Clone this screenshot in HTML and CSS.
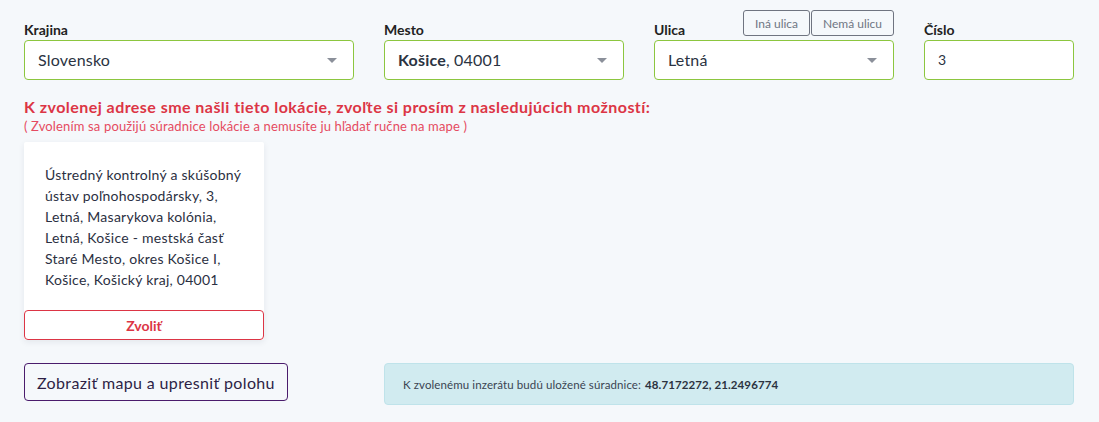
FILE: index.html
```html
<!DOCTYPE html>
<html lang="sk">
<head>
<meta charset="utf-8">
<title>Adresa</title>
<link rel="stylesheet" href="styles.css">
</head>
<body>
<main class="page">
  <div class="fields">
    <div class="field">
      <div class="label-row"><label class="label">Krajina</label></div>
      <div class="select"><span class="value">Slovensko</span><span class="caret"></span></div>
    </div>
    <div class="field">
      <div class="label-row"><label class="label">Mesto</label></div>
      <div class="select"><span class="value"><b>Košice</b>, 04001</span><span class="caret"></span></div>
    </div>
    <div class="field">
      <div class="label-row">
        <label class="label">Ulica</label>
        <div class="street-btns"><button class="mini-btn">Iná ulica</button><button class="mini-btn">Nemá ulicu</button></div>
      </div>
      <div class="select"><span class="value">Letná</span><span class="caret"></span></div>
    </div>
    <div class="field">
      <div class="label-row"><label class="label">Číslo</label></div>
      <div class="input"><span class="value small">3</span></div>
    </div>
  </div>

  <h2 class="notice">K zvolenej adrese sme našli tieto lokácie, zvoľte si prosím z nasledujúcich možností:</h2>
  <p class="notice-sub">( Zvolením sa použijú súradnice lokácie a nemusíte ju hľadať ručne na mape )</p>

  <div class="cards">
    <div class="card">
      <p class="card-text">Ústredný kontrolný a skúšobný ústav poľnohospodársky, 3, Letná, Masarykova kolónia, Letná, Košice - mestská časť Staré Mesto, okres Košice I, Košice, Košický kraj, 04001</p>
      <button class="choose-btn">Zvoliť</button>
    </div>
  </div>

  <div class="bottom">
    <div><button class="map-btn">Zobraziť mapu a upresniť polohu</button></div>
    <div class="alert">K zvolenému inzerátu budú uložené súradnice: <b>48.7172272, 21.2496774</b></div>
  </div>
</main>
</body>
</html>
```

FILE: styles.css
```css
* { box-sizing: border-box; }
html, body { margin: 0; padding: 0; }
body {
  background: #f5f8fb;
  font-family: Lato, "Open Sans", sans-serif;
  color: #2b3240;
}
.page {
  width: 1050px;
  margin-left: 24px;
  padding-top: 20px;
}
.fields {
  display: grid;
  grid-template-columns: 330px 240px 240px 150px;
  column-gap: 30px;
}
.label-row {
  height: 20px;
  display: flex;
  justify-content: space-between;
  align-items: flex-end;
}
.label {
  font-size: 14px;
  font-weight: 700;
  color: #222;
  line-height: 20px;
  align-self: flex-start;
}
.street-btns {
  display: flex;
  margin-bottom: 4px;
}
.mini-btn {
  font-family: inherit;
  font-size: 12px;
  color: #6f7683;
  background: transparent;
  border: 1px solid #6f7480;
  border-radius: 3px;
  height: 26px;
  padding: 0 8px;
  margin: 0;
}
.mini-btn + .mini-btn { margin-left: 1px; }
.street-btns .mini-btn:first-child { width: 67px; }
.street-btns .mini-btn:last-child { width: 83px; }
.select, .input {
  height: 40px;
  background: #fff;
  border: 1px solid #8cc63f;
  border-radius: 4px;
  display: flex;
  align-items: center;
  justify-content: space-between;
  padding: 0 16px 2px 13px;
}
.value {
  font-size: 16px;
  color: #2b3342;
  letter-spacing: 0.2px;
}
.value.small { font-size: 14px; }
.value b { font-weight: 700; }
.caret {
  width: 0;
  height: 0;
  border-left: 5px solid transparent;
  border-right: 5px solid transparent;
  border-top: 5px solid #8b909a;
  margin-top: 2px;
}
.notice {
  margin: 18px 0 0;
  font-size: 16px;
  font-weight: 700;
  color: #dc3545;
  line-height: 18px;
  letter-spacing: 0.45px;
}
.notice-sub {
  margin: 2px 0 0;
  font-size: 13px;
  color: #e54b61;
  line-height: 16px;
  letter-spacing: 0.15px;
}
.cards {
  margin-top: 8px;
  display: flex;
  gap: 30px;
}
.card {
  width: 240px;
  background: #fff;
  box-shadow: 0 2px 6px rgba(30, 40, 60, 0.08);
  border-radius: 2px;
}
.card-text {
  margin: 0;
  padding: 22px 10px 20px 21px;
  font-size: 14px;
  line-height: 21px;
  color: #2b3042;
  letter-spacing: 0.25px;
}
.choose-btn {
  display: block;
  width: 100%;
  height: 30px;
  background: #fff;
  border: 1px solid #dc3545;
  border-radius: 4px;
  color: #dc3545;
  font-family: inherit;
  font-weight: 700;
  font-size: 14px;
}
.bottom {
  margin-top: 23px;
  display: grid;
  grid-template-columns: 330px 1fr;
  column-gap: 30px;
  align-items: start;
}
.map-btn {
  height: 38px;
  padding: 0 12px;
  background: transparent;
  border: 1px solid #4a1c6c;
  border-radius: 4px;
  font-family: inherit;
  font-size: 16px;
  color: #2d1f45;
  letter-spacing: 0.35px;
}
.alert {
  height: 42px;
  background: #d1ebf0;
  border: 1px solid #bfe3ea;
  border-radius: 4px;
  padding: 0 18px;
  display: flex;
  align-items: center;
  font-size: 11.5px;
  color: #3a4452;
  letter-spacing: 0.1px;
}
.alert b { margin-left: 4px; font-weight: 700; color: #2b3240; }
```
